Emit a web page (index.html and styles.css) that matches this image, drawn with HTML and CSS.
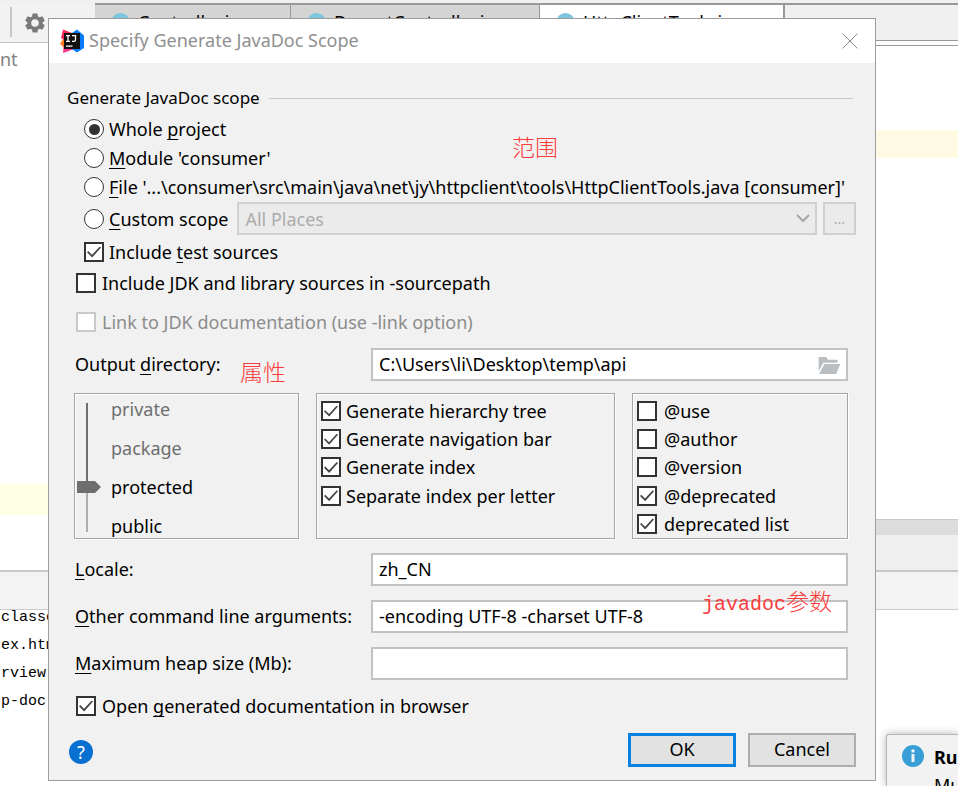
FILE: index.html
```html
<!DOCTYPE html>
<html lang="en">
<head>
<meta charset="utf-8">
<title>Specify Generate JavaDoc Scope</title>
<link rel="stylesheet" href="styles.css">
</head>
<body>
<div class="ide">
  <header class="ide-top">
    <div class="ide-tools">
      <svg class="gear" viewBox="0 0 20 20"><path fill="#7a7a7a" fill-rule="evenodd" d="M7.6 0.5h4.8l.6 2.9 1.6.9 2.8-1 2.4 4.2-2.2 1.9v1.2l2.2 1.9-2.4 4.2-2.8-1-1.6.9-.6 2.9H7.6L7 16.600l-1.600-.9-2.800 1L.2 12.500l2.200-1.900V9.400L.2 7.500l2.400-4.200 2.800 1L7 3.400zM10 6.200a3.800 3.800 0 1 0 0 7.600 3.800 3.800 0 0 0 0-7.600z"/></svg>
    </div>
    <nav class="tabs">
      <span class="tab tab-first"><i class="dot"></i>Controller.java</span>
      <span class="tab tab-second"><i class="dot"></i>DeportController.java</span>
      <span class="tab tab-active"><i class="dot"></i>HttpClientTools.java</span>
      <span class="tab-rest"></span>
    </nav>
  </header>
  <div class="ide-main">
    <aside class="project"><p>nt</p><div class="mark"></div></aside>
    <section class="editor"><div class="caret-line"></div><div class="splitter"></div><div class="crumbs"></div></section>
  </div>
  <div class="run-bar"></div>
  <pre class="console">classes
ex.html
rview-t
p-doc.h</pre>
</div>

<aside class="notice">
  <svg class="notice-icon" viewBox="0 0 22 22"><circle cx="11" cy="11" r="11" fill="#389fd6"/><path fill="#f4f4f4" d="M9.500 4.500h3v3h-3zM9.500 9h3v8h-3z"/></svg>
  <div><strong>Run</strong><p>Mu</p></div>
</aside>

<form class="dialog">
  <header class="titlebar">
    <svg class="logo" viewBox="0 0 24 24">
      <path fill="#fc801d" d="M0 14.500 4 9l5 6-4 5z"/>
      <path fill="#fe2857" d="M3 0.500 12 4 8 14 1 9z"/>
      <path fill="#ff318c" d="M4 14 3 24l14-5z"/>
      <path fill="#087cfa" d="M12 4 17 0.500l7 6V19l-7 4.500-6-4z"/>
      <path fill="#111" d="M4 4h16v16H4z"/>
      <path fill="none" stroke="#fff" stroke-width="1.300" d="M6 6.700h4M8 6.700v5.600M6 12.300h4M12 6.700h3.500v4q0 1.600-1.600 1.600H12M6 17.200h6.500"/>
    </svg>
    <h1>Specify Generate JavaDoc Scope</h1>
    <button type="button" class="close" aria-label="Close"><svg viewBox="0 0 16 16"><path d="M.5.5l15 15M15.500.5l-15 15" stroke="#8c8c8c" fill="none"/></svg></button>
  </header>

  <div class="body">
    <h2 class="section"><span>Generate JavaDoc scope</span></h2>

    <div class="scopes">
      <label class="opt"><input type="radio" name="scope" checked><span>Whole <u>p</u>roject</span></label>
      <label class="opt"><input type="radio" name="scope"><span><u>M</u>odule 'consumer'</span></label>
      <label class="opt"><input type="radio" name="scope"><span><u>F</u>ile '...\consumer\src\main\java\net\jy\httpclient\tools\HttpClientTools.java [consumer]'</span></label>
      <div class="custom">
        <label class="opt"><input type="radio" name="scope"><span><u>C</u>ustom scope</span></label>
        <div class="combo">
          <select disabled aria-label="Custom scope"><option>All Places</option></select>
          <svg viewBox="0 0 14 9"><path d="M1 1l6 6 6-6" fill="none" stroke="#a6a6a6" stroke-width="2"/></svg>
        </div>
        <button type="button" class="more" disabled>...</button>
      </div>
    </div>
    <label class="opt nested"><input type="checkbox" checked><span>Include <u>t</u>est sources</span></label>

    <div class="settings">
      <label class="opt"><input type="checkbox"><span>Include JDK and library sources in -sourcepath</span></label>
      <label class="opt link-jdk"><input type="checkbox" disabled><span>Link to JDK documentation (use -link option)</span></label>

      <div class="field output">
        <label for="out">Output <u>d</u>irectory:</label>
        <div class="browse">
          <input type="text" id="out" value="C:\Users\li\Desktop\temp\api">
          <svg viewBox="0 0 23 18"><path fill="#b9bec2" d="M0 0h8l2 3h10v3H5L0 15z"/><path fill="#b9bec2" d="M6 7.500h17L18.500 18H.5z"/></svg>
        </div>
      </div>

      <div class="panels">
        <fieldset class="panel access">
          <input type="range" min="0" max="3" value="2" aria-label="Visibility">
          <div class="levels"><span class="off">private</span><span class="off">package</span><span>protected</span><span>public</span></div>
        </fieldset>
        <fieldset class="panel checks">
          <label class="opt"><input type="checkbox" checked><span>Generate hierarchy tree</span></label>
          <label class="opt"><input type="checkbox" checked><span>Generate navigation bar</span></label>
          <label class="opt"><input type="checkbox" checked><span>Generate index</span></label>
          <label class="opt"><input type="checkbox" checked><span>Separate index per letter</span></label>
        </fieldset>
        <fieldset class="panel checks tags">
          <label class="opt"><input type="checkbox"><span>@use</span></label>
          <label class="opt"><input type="checkbox"><span>@author</span></label>
          <label class="opt"><input type="checkbox"><span>@version</span></label>
          <label class="opt"><input type="checkbox" checked><span>@deprecated</span></label>
          <label class="opt"><input type="checkbox" checked><span>deprecated list</span></label>
        </fieldset>
      </div>

      <div class="field"><label for="loc"><u>L</u>ocale:</label><input type="text" id="loc" value="zh_CN"></div>
      <div class="field"><label for="args"><u>O</u>ther command line arguments:</label><input type="text" id="args" value="-encoding UTF-8 -charset UTF-8"></div>
      <div class="field"><label for="heap"><u>M</u>aximum heap size (Mb):</label><input type="text" id="heap"></div>
      <label class="opt open-docs"><input type="checkbox" checked><span>Open <u>g</u>enerated documentation in browser</span></label>
    </div>

    <footer class="actions">
      <button type="button" class="help">?</button>
      <button type="submit" class="btn primary">OK</button>
      <button type="button" class="btn">Cancel</button>
    </footer>
  </div>

  <span class="note note-scope">范围</span>
  <span class="note note-props">属性</span>
  <span class="note note-args"><span class="latin">javadoc</span>参数</span>
</form>
</body>
</html>
```
FILE: styles.css
```css
* { box-sizing: border-box; }
html, body { height: 100%; }
body {
  margin: 0;
  position: relative;
  overflow: hidden;
  background: #fff;
  color: #000;
  font: 18px/24px "Noto Sans", "Open Sans", "Noto Sans CJK SC", sans-serif;
}
h1, h2, p, pre, fieldset { margin: 0; padding: 0; font: inherit; }
button, input, select { font: inherit; color: inherit; margin: 0; }
svg { display: block; }
u { text-underline-offset: 3px; text-decoration-skip-ink: none; }

/* Editor window behind the dialog */
.ide { height: 100%; display: flex; flex-direction: column; }
.ide-top { display: flex; height: 43px; border-top: 3px solid #f0f0f0; }
.ide-tools {
  width: 95px; padding: 10px 0 0 25px; border-bottom: 1px solid #c4c4c4;
  background: linear-gradient(#c8c8c8, #c8c8c8) 10px 4px / 2px 30px no-repeat #f2f2f2;
}
.gear { width: 20px; height: 20px; }
.tabs { flex: 1; display: flex; height: 38px; border-top: 2px solid #999; background: #f0f0f0; border-bottom: 1px solid #999; }
.tab { display: flex; gap: 8px; padding: 8px 0 0 16px; background: #d4d4d4; border-right: 1px solid #999; white-space: nowrap; overflow: hidden; line-height: 18px; }
.tab-first { width: 196px; }
.tab-second { width: 249px; }
.tab-active { width: 245px; background: #fff; border-right: 2px solid #999; }
.tab-rest { flex: 1; }
.dot { width: 19px; height: 19px; border-radius: 50%; background: #7cc5de; }
.ide-main { display: flex; height: 527px; }
.project { width: 95px; display: flex; flex-direction: column; color: #808080; }
.project p { padding-top: 4px; height: 441px; }
.mark { height: 31px; background: #ffffe4; }
.editor { flex: 1; border-top: 1px solid #999; margin-top: 2px; display: flex; flex-direction: column; }
.caret-line { height: 28px; margin-top: 84px; background: #fffae3; }
.splitter { height: 16px; margin-top: 361px; background: #dcdcdc; border-top: 1px solid #c8c8c8; }
.crumbs { flex: 1; background: #efefef; }
.run-bar { height: 40px; background: #f3f3f3; border-top: 2px solid #c8c8c8; border-bottom: 1px solid #ccc; }
.console { margin-top: -6px; padding-left: 1px; font: 15px/28px "Liberation Mono", monospace; }

.notice {
  position: absolute; left: 886px; right: 0; top: 734px; bottom: 0;
  display: flex; gap: 10px; padding: 10px 0 0 15px; overflow: hidden;
  background: #f2f2f2; border: solid #b5b5b5; border-width: 1px 0 0 1px; border-radius: 3px 0 0 0;
  box-shadow: 0 0 8px rgba(0, 0, 0, .3);
}
.notice-icon { flex: none; width: 22px; height: 22px; }
.notice p { padding-top: 4px; }

/* Dialog */
.dialog {
  position: absolute; left: 48px; right: 82px; top: 18px;
  background: #f1f1f1; border: 1px solid #9d9d9d;
}
.titlebar { display: flex; align-items: center; height: 44px; padding: 0 17px 0 11px; background: #fff; color: #8f8f8f; }
.logo { width: 24px; height: 24px; margin-right: 5px; }
.titlebar h1 { flex: 1; font-size: 18px; line-height: 24px; padding-bottom: 2px; }
.close { padding: 0; border: 0; background: none; }
.close svg { width: 16px; height: 16px; }

.body { padding: 23px 19px 13px 18px; }
.section { display: flex; align-items: center; gap: 9px; margin: 0 3px 5px 0; font-size: 17px; line-height: 24px; }
.section::after { content: ""; flex: 1; height: 1px; background: #c9c9c9; }
.scopes { display: grid; gap: 1px; padding-left: 17px; }
.opt { display: flex; align-items: center; gap: 5px; height: 28px; white-space: nowrap; }
.opt input {
  appearance: none; flex: none; width: 20px; height: 20px;
  display: grid; place-items: center; background: #fff; border: 2px solid #333;
}
.opt input[type="radio"] { border-radius: 50%; border-width: 1px; }
.opt input[type="radio"]:checked::before { content: ""; width: 11px; height: 11px; border-radius: 50%; background: #333; }
.opt input[type="checkbox"] { border-width: 1px; outline: 1px solid #333; outline-offset: -2px; }
.opt input[type="checkbox"]:checked::before {
  content: ""; width: 14px; height: 11px; background: #444;
  clip-path: polygon(0 52%, 9% 42%, 36% 76%, 91% 0, 100% 9%, 37% 100%);
}
.opt input[type="checkbox"]:disabled { border-color: #c9c9c9; outline-color: #c9c9c9; }
.opt input:disabled + span { color: #8c8c8c; }
.custom { display: flex; align-items: center; gap: 6px; height: 33px; }
.combo { flex: 1; position: relative; margin-left: 3px; }
.combo select {
  appearance: none; display: block; width: 100%; height: 33px; padding: 0 6px;
  background: #ebebeb; border: 2px solid #d0d0d0; border-radius: 0; color: #ababab; opacity: 1;
}
.combo svg { position: absolute; right: 7px; top: 12px; width: 14px; height: 9px; }
.more { width: 33px; height: 33px; padding: 0; border: 2px solid #d0d0d0; background: #ebebeb; color: #ababab; font-size: 14px; }
.nested { margin: 3px 0 3px 17px; }

.settings { padding: 0 8px; }
.settings .opt { gap: 6px; padding-left: 1px; }
.settings .link-jdk { margin-top: 11px; }
.field { display: grid; grid-template-columns: 296px 1fr; align-items: center; margin-top: 14px; }
.field.output { margin-top: 12px; }
.field label { padding-bottom: 2px; }
.field input {
  width: 100%; height: 33px; padding: 0 6px 2px; display: block;
  background: #fff; border: 2px solid #c2c2c2; border-radius: 0; outline: 0;
}
.browse { position: relative; }
.browse svg { position: absolute; right: 7px; top: 9px; width: 23px; height: 17px; }
.panels { display: grid; grid-template-columns: 225px 299px 216px; justify-content: space-between; margin: 12px 0 0 -1px; }
.panel {
  min-width: 0; height: 146px; border: 1px solid #a5a5a5;
  box-shadow: 1px 1px 0 #fff, inset 1px 1px 0 #fff;
}
.access { display: flex; padding: 9px 0 0 2px; gap: 10px; }
.access input {
  appearance: none; writing-mode: vertical-lr; width: 24px; height: 129px;
  background: linear-gradient(#6e6e6e 65%, #afafaf 65%) 9px 0 / 2px 100% no-repeat;
}
.access input::-webkit-slider-thumb {
  appearance: none; width: 24px; height: 12px; background: #6e6e6e;
  clip-path: polygon(0 0, 75% 0, 100% 50%, 75% 100%, 0 100%);
}
.levels { display: flex; flex-direction: column; justify-content: space-between; height: 141px; margin-top: -6px; }
.off { color: #6e6e6e; }
.checks { display: grid; grid-template-rows: repeat(5, 1fr); padding: 3px 0 0 3px; }
.checks .opt { gap: 5px; height: auto; }
.tags .opt { gap: 7px; }
.open-docs { margin-top: 12px; }

.actions { display: flex; gap: 12px; align-items: center; margin-top: 13px; }
.help { width: 24px; height: 24px; margin: 4px auto 0 2px; padding: 0; border: 0; border-radius: 50%; background: #0870d1; color: #fff; line-height: 24px; }
.btn { width: 108px; height: 34px; padding: 0 0 2px; background: #e2e2e2; border: 2px solid #adadad; line-height: 24px; }
.primary { border: 3px solid #0883e2; }

/* Red remarks laid over the dialog */
.note { position: absolute; color: #fa3c3c; font: 300 23px/28px "Noto Sans CJK SC", sans-serif; white-space: nowrap; }
.note .latin { font: 20px/28px "Liberation Mono", monospace; }
.note-scope { left: 463px; top: 113px; }
.note-props { left: 191px; top: 338px; }
.note-args { left: 653px; top: 567px; }
```
